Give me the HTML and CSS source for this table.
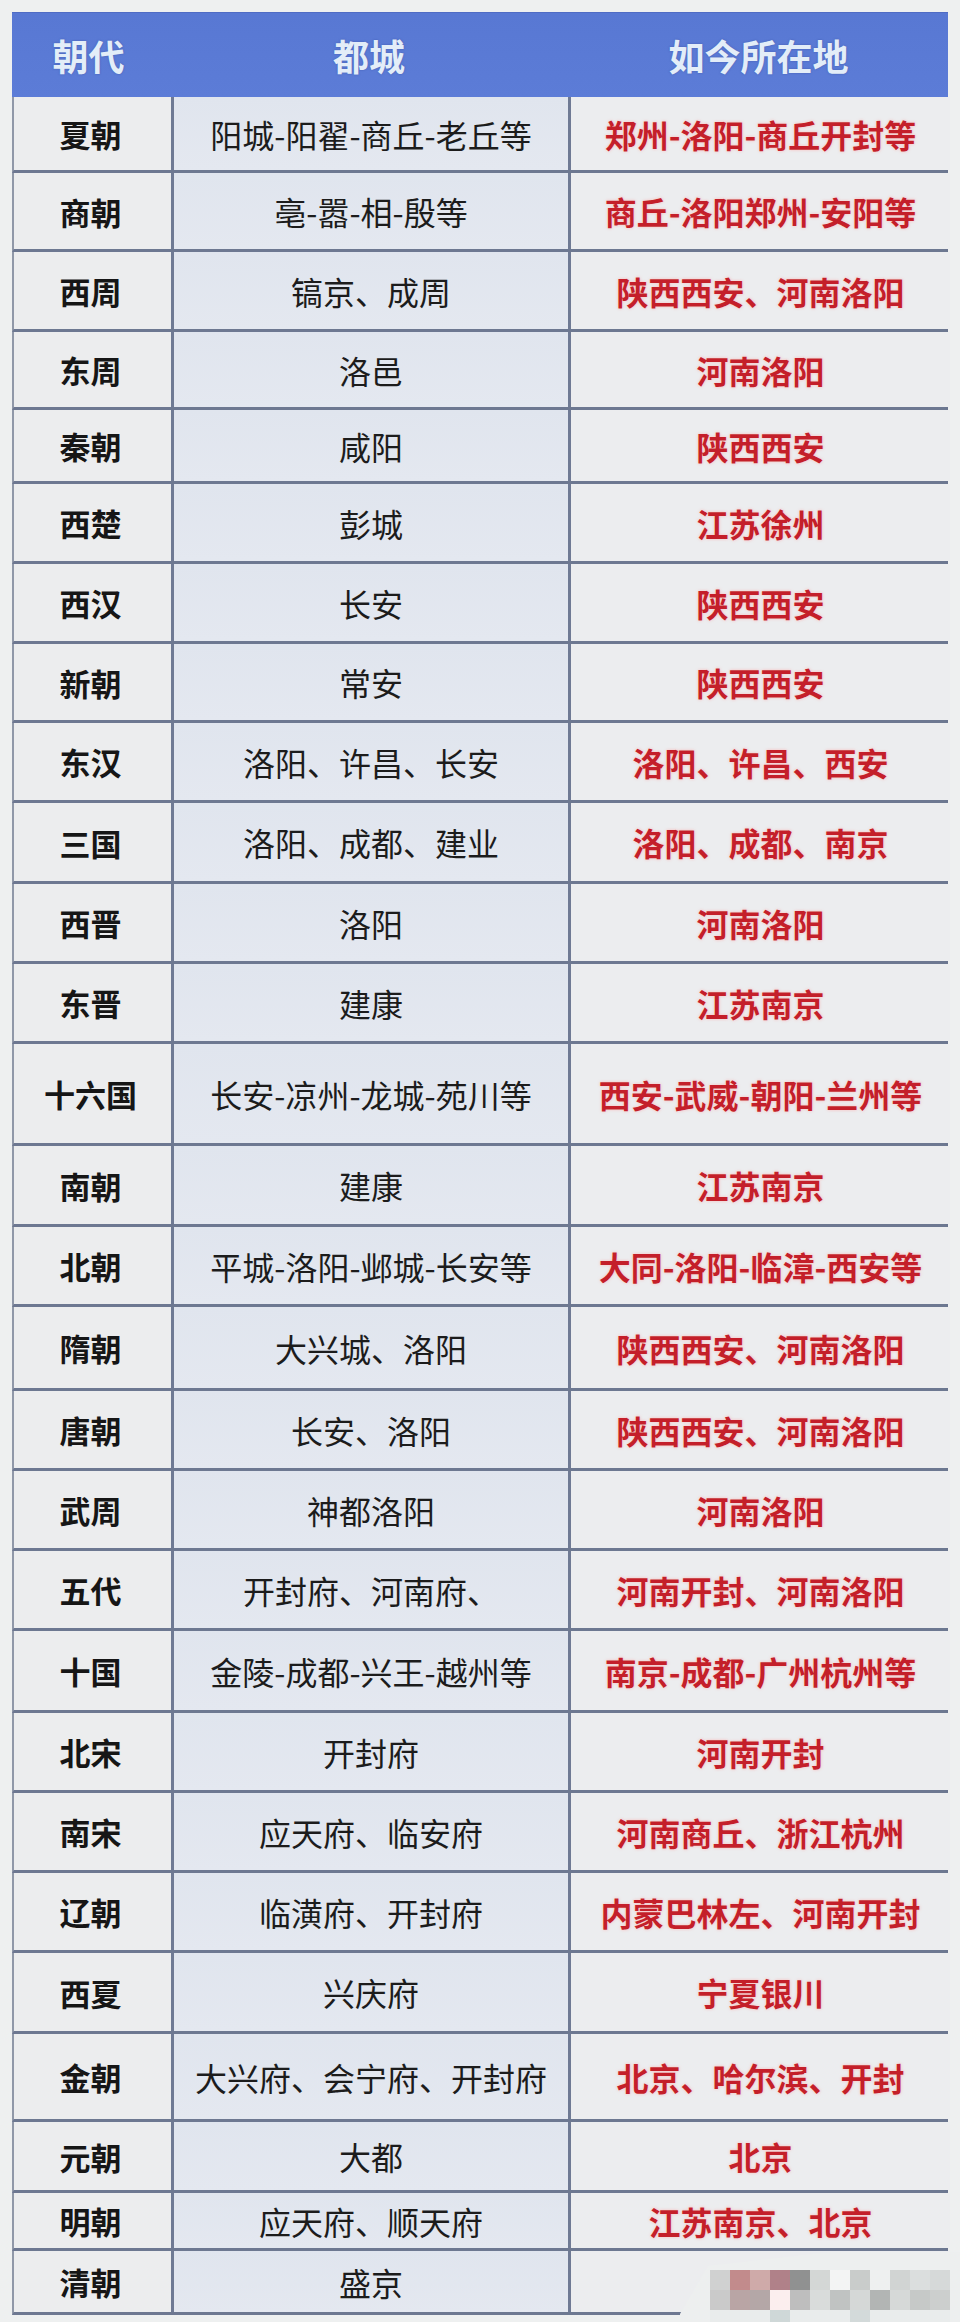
FILE: index.html
```html
<!DOCTYPE html>
<html lang="zh-CN">
<head>
<meta charset="utf-8">
<title>历代都城</title>
<link rel="stylesheet" href="styles.css">
</head>
<body>
<div class="page">
  <div class="table">
    <div class="row head">
      <div class="cell">朝代</div>
      <div class="cell">都城</div>
      <div class="cell">如今所在地</div>
    </div>
    <div class="row r76"><div class="cell c1">夏朝</div><div class="cell c2">阳城-阳翟-商丘-老丘等</div><div class="cell c3">郑州-洛阳-商丘开封等</div></div>
    <div class="row r79"><div class="cell c1">商朝</div><div class="cell c2">亳-嚣-相-殷等</div><div class="cell c3">商丘-洛阳郑州-安阳等</div></div>
    <div class="row"><div class="cell c1">西周</div><div class="cell c2">镐京、成周</div><div class="cell c3">陕西西安、河南洛阳</div></div>
    <div class="row r78"><div class="cell c1">东周</div><div class="cell c2">洛邑</div><div class="cell c3">河南洛阳</div></div>
    <div class="row r74"><div class="cell c1">秦朝</div><div class="cell c2">咸阳</div><div class="cell c3">陕西西安</div></div>
    <div class="row"><div class="cell c1">西楚</div><div class="cell c2">彭城</div><div class="cell c3">江苏徐州</div></div>
    <div class="row"><div class="cell c1">西汉</div><div class="cell c2">长安</div><div class="cell c3">陕西西安</div></div>
    <div class="row r79"><div class="cell c1">新朝</div><div class="cell c2">常安</div><div class="cell c3">陕西西安</div></div>
    <div class="row"><div class="cell c1">东汉</div><div class="cell c2">洛阳、许昌、长安</div><div class="cell c3">洛阳、许昌、西安</div></div>
    <div class="row r81"><div class="cell c1">三国</div><div class="cell c2">洛阳、成都、建业</div><div class="cell c3">洛阳、成都、南京</div></div>
    <div class="row"><div class="cell c1">西晋</div><div class="cell c2">洛阳</div><div class="cell c3">河南洛阳</div></div>
    <div class="row"><div class="cell c1">东晋</div><div class="cell c2">建康</div><div class="cell c3">江苏南京</div></div>
    <div class="row r102"><div class="cell c1">十六国</div><div class="cell c2">长安-凉州-龙城-苑川等</div><div class="cell c3">西安-武威-朝阳-兰州等</div></div>
    <div class="row r81"><div class="cell c1">南朝</div><div class="cell c2">建康</div><div class="cell c3">江苏南京</div></div>
    <div class="row"><div class="cell c1">北朝</div><div class="cell c2">平城-洛阳-邺城-长安等</div><div class="cell c3">大同-洛阳-临漳-西安等</div></div>
    <div class="row r84"><div class="cell c1">隋朝</div><div class="cell c2">大兴城、洛阳</div><div class="cell c3">陕西西安、河南洛阳</div></div>
    <div class="row"><div class="cell c1">唐朝</div><div class="cell c2">长安、洛阳</div><div class="cell c3">陕西西安、河南洛阳</div></div>
    <div class="row"><div class="cell c1">武周</div><div class="cell c2">神都洛阳</div><div class="cell c3">河南洛阳</div></div>
    <div class="row"><div class="cell c1">五代</div><div class="cell c2">开封府、河南府、</div><div class="cell c3">河南开封、河南洛阳</div></div>
    <div class="row r82"><div class="cell c1">十国</div><div class="cell c2">金陵-成都-兴王-越州等</div><div class="cell c3">南京-成都-广州杭州等</div></div>
    <div class="row"><div class="cell c1">北宋</div><div class="cell c2">开封府</div><div class="cell c3">河南开封</div></div>
    <div class="row"><div class="cell c1">南宋</div><div class="cell c2">应天府、临安府</div><div class="cell c3">河南商丘、浙江杭州</div></div>
    <div class="row"><div class="cell c1">辽朝</div><div class="cell c2">临潢府、开封府</div><div class="cell c3">内蒙巴林左、河南开封</div></div>
    <div class="row r81"><div class="cell c1">西夏</div><div class="cell c2">兴庆府</div><div class="cell c3">宁夏银川</div></div>
    <div class="row r88"><div class="cell c1">金朝</div><div class="cell c2">大兴府、会宁府、开封府</div><div class="cell c3">北京、哈尔滨、开封</div></div>
    <div class="row r71"><div class="cell c1">元朝</div><div class="cell c2">大都</div><div class="cell c3">北京</div></div>
    <div class="row r58"><div class="cell c1">明朝</div><div class="cell c2">应天府、顺天府</div><div class="cell c3">江苏南京、北京</div></div>
    <div class="row r64"><div class="cell c1">清朝</div><div class="cell c2">盛京</div><div class="cell c3"></div></div>
  </div>
  <div class="mark">
    <div class="px p1"></div><div class="px p2"></div><div class="px p3"></div><div class="px p4"></div><div class="px p5"></div><div class="px p6"></div><div class="px p7"></div><div class="px p8"></div><div class="px p9"></div><div class="px p10"></div><div class="px p11"></div><div class="px p12"></div>
    <div class="px q1"></div><div class="px q2"></div><div class="px q3"></div><div class="px q4"></div><div class="px q5"></div><div class="px q6"></div><div class="px q7"></div><div class="px q8"></div><div class="px q9"></div><div class="px q10"></div><div class="px q11"></div><div class="px q12"></div>
    <div class="px s1"></div><div class="px s2"></div><div class="px s3"></div><div class="px s4"></div><div class="px s5"></div><div class="px s6"></div><div class="px s7"></div><div class="px s8"></div><div class="px s9"></div><div class="px s10"></div><div class="px s11"></div><div class="px s12"></div>
  </div>
</div>
</body>
</html>
```

FILE: styles.css
```css
html, body {
  margin: 0;
  padding: 0;
  background: #eef0f0;
}

.page {
  position: relative;
  width: 960px;
  height: 2322px;
  padding-top: 12px;
  box-sizing: border-box;
  font-family: "Noto Sans CJK SC", "Noto Sans", sans-serif;
}

.table {
  margin-left: 12px;
  width: 936px;
  box-sizing: border-box;
}

.row {
  display: grid;
  grid-template-columns: 157px 400px 379px;
  height: 80px;
  box-sizing: border-box;
  border-bottom: 3px solid #6d7891;
  border-left: 2px solid #9098a8;
  border-right: 3px solid #6b7590;
}

.row.head {
  height: 85px;
  border: none;
  border-top: 1px solid #4f6cc4;
  background: linear-gradient(180deg, #5878d3 0%, #5c7cd7 100%);
}

.r58 { height: 58px; }
.r64 { height: 64px; }
.r71 { height: 71px; }
.r74 { height: 74px; }
.r76 { height: 76px; }
.r78 { height: 78px; }
.r79 { height: 79px; }
.r81 { height: 81px; }
.r82 { height: 82px; }
.r84 { height: 84px; }
.r88 { height: 88px; }
.r102 { height: 102px; }

.cell {
  display: flex;
  align-items: center;
  justify-content: center;
  white-space: nowrap;
  line-height: 1;
}

.head .cell {
  font-size: 36px;
  font-weight: 700;
  color: #e3edf8;
  text-shadow: 0 0 2px rgba(40, 60, 140, 0.5);
}

.head .cell:first-child {
  padding-right: 4px;
}

.c1 {
  background: #ecedee;
  font-size: 31px;
  font-weight: 700;
  color: #161616;
  padding-right: 4px;
}

.c2 {
  background: linear-gradient(180deg, #e0e5ee 0%, #e4e8f0 100%);
  border-left: 3px solid #6f7a94;
  border-right: 3px solid #6f7a94;
  font-size: 32px;
  font-weight: 400;
  color: #1c1c1c;
}

.c3 {
  background: #ecedef;
  font-size: 32px;
  font-weight: 700;
  color: #c41f2a;
  text-shadow: 0 0 1px #fff, 0 0 3px rgba(255, 150, 150, 0.7);
}

/* blurred watermark in the bottom right */
.mark {
  position: absolute;
  left: 680px;
  top: 2252px;
  width: 280px;
  height: 70px;
  background: #edefef;
  clip-path: polygon(150px 0, 100% 0, 100% 100%, 0 100%, 0 62px, 28px 14px);
  display: grid;
  grid-template-columns: repeat(12, 20px);
  grid-template-rows: 20px 20px 12px;
  padding: 18px 0 0 30px;
  box-sizing: border-box;
}

.p1 { background: #d0d1d1; }
.p2 { background: #c28b8c; }
.p3 { background: #cfaaa9; }
.p4 { background: #b08189; }
.p5 { background: #909191; }
.p6 { background: #d4d7d6; }
.p7 { background: #f3f4f4; }
.p8 { background: #c9cccb; }
.p9 { background: #eef0f0; }
.p10 { background: #d1d4d3; }
.p11 { background: #dbdede; }
.p12 { background: #d6d9d9; }
.q1 { background: #cacaca; }
.q2 { background: #b9a5a5; }
.q3 { background: #b4a7a7; }
.q4 { background: #fbeeee; }
.q5 { background: #bebebe; }
.q6 { background: #d9dcdb; }
.q7 { background: #c0c3c2; }
.q8 { background: #d5d8d7; }
.q9 { background: #b2b5b4; }
.q10 { background: #d6d9d8; }
.q11 { background: #c6c9c8; }
.q12 { background: #cccfce; }
.s1, .s2, .s3, .s5, .s6, .s7, .s9, .s10, .s11, .s12 { background: #e9ecec; }
.s4 { background: #cfd8d8; }
.s8 { background: #d3dada; }
```
